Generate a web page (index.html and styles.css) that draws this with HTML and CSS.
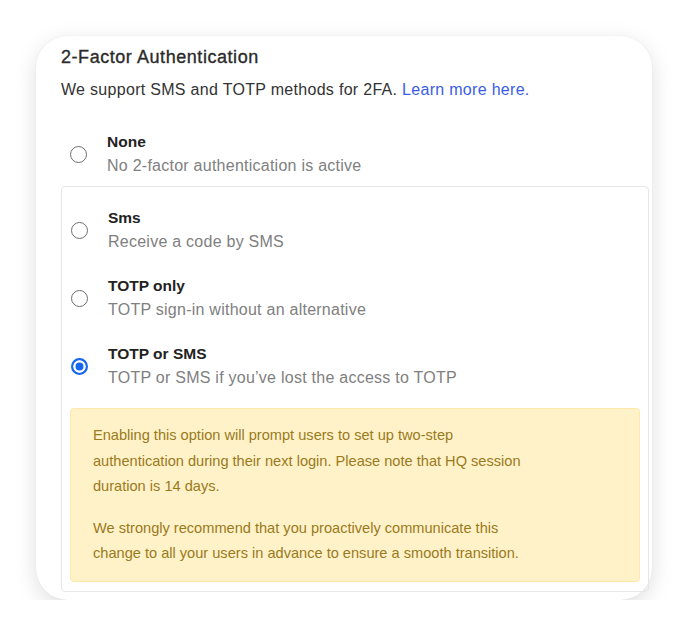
FILE: index.html
```html
<!DOCTYPE html>
<html lang="en">
<head>
    <meta charset="UTF-8">
    <meta name="viewport" content="width=device-width, initial-scale=1.0">
    <title>2-Factor Authentication</title>
    <link rel="stylesheet" href="styles.css">
</head>
<body>
    <div class="card">
        <h2 class="card-title">2-Factor Authentication</h2>
        <p class="card-subtitle">We support SMS and TOTP methods for 2FA. <a href="#" class="link">Learn more here.</a></p>

        <label class="option option-top">
            <input type="radio" name="twofa" value="none">
            <span class="option-text">
                <span class="option-name">None</span>
                <span class="option-desc">No 2-factor authentication is active</span>
            </span>
        </label>

        <div class="option-box">
            <label class="option">
                <input type="radio" name="twofa" value="sms">
                <span class="option-text">
                    <span class="option-name">Sms</span>
                    <span class="option-desc">Receive a code by SMS</span>
                </span>
            </label>

            <label class="option">
                <input type="radio" name="twofa" value="totp">
                <span class="option-text">
                    <span class="option-name">TOTP only</span>
                    <span class="option-desc">TOTP sign-in without an alternative</span>
                </span>
            </label>

            <label class="option">
                <input type="radio" name="twofa" value="totp_sms" checked>
                <span class="option-text">
                    <span class="option-name">TOTP or SMS</span>
                    <span class="option-desc">TOTP or SMS if you’ve lost the access to TOTP</span>
                </span>
            </label>

            <div class="alert">
                <p>Enabling this option will prompt users to set up two-step authentication during their next login. Please note that HQ session duration is 14 days.</p>
                <p>We strongly recommend that you proactively communicate this change to all your users in advance to ensure a smooth transition.</p>
            </div>
        </div>
    </div>
</body>
</html>
```

FILE: styles.css
```css
* {
    margin: 0;
    padding: 0;
    box-sizing: border-box;
}

body {
    font-family: 'Liberation Sans', Arial, sans-serif;
    background: #fff;
    color: #333;
}

.card {
    width: 616px;
    margin: 36px 0 0 36px;
    padding: 12px 3px 8px 25px;
    background: #fff;
    border-radius: 32px;
    box-shadow: 0 6px 22px rgba(0,0,0,0.13), 0 0 2px rgba(0,0,0,0.06);
}

.card-title {
    font-size: 18px;
    font-weight: normal;
    line-height: 18px;
    letter-spacing: 0.55px;
    color: #2b2b2b;
    -webkit-text-stroke: 0.35px #2b2b2b;
}

.card-subtitle {
    margin-top: 14px;
    font-size: 16px;
    line-height: 20px;
    letter-spacing: 0.3px;
    color: #333;
}

.link {
    color: #3a5de3;
    text-decoration: none;
}

.option {
    display: flex;
    align-items: center;
    gap: 20px;
    padding: 10px 0 9px 1px;
    cursor: pointer;
}

.option-top {
    margin-top: 19px;
    padding: 10px 0 8px 9px;
}

.option input {
    appearance: none;
    width: 17px;
    height: 17px;
    flex-shrink: 0;
    border: 1px solid #6e6e6e;
    border-radius: 50%;
    background: #fff;
    margin-top: 1px;
}

.option input:checked {
    border: 2px solid #1668f0;
    background: #1668f0;
    box-shadow: inset 0 0 0 2.5px #fff;
}

.option-text {
    display: flex;
    flex-direction: column;
}

.option-name {
    font-size: 15.5px;
    font-weight: bold;
    line-height: 25px;
    color: #222;
}

.option-desc {
    font-size: 16px;
    line-height: 24px;
    letter-spacing: 0.25px;
    color: #808080;
}

.option-box {
    border: 1px solid #e6e6e6;
    border-radius: 4px;
    padding: 8px 8px 9px 8px;
}

.alert {
    margin-top: 9px;
    background: #fff2c9;
    border: 1px solid #fde8a8;
    border-radius: 4px;
    padding: 14px 22px;
    color: #9a7a1c;
    font-size: 14.6px;
    line-height: 25.6px;
}

.alert p {
    max-width: 450px;
}

.alert p + p {
    margin-top: 16px;
}
```
